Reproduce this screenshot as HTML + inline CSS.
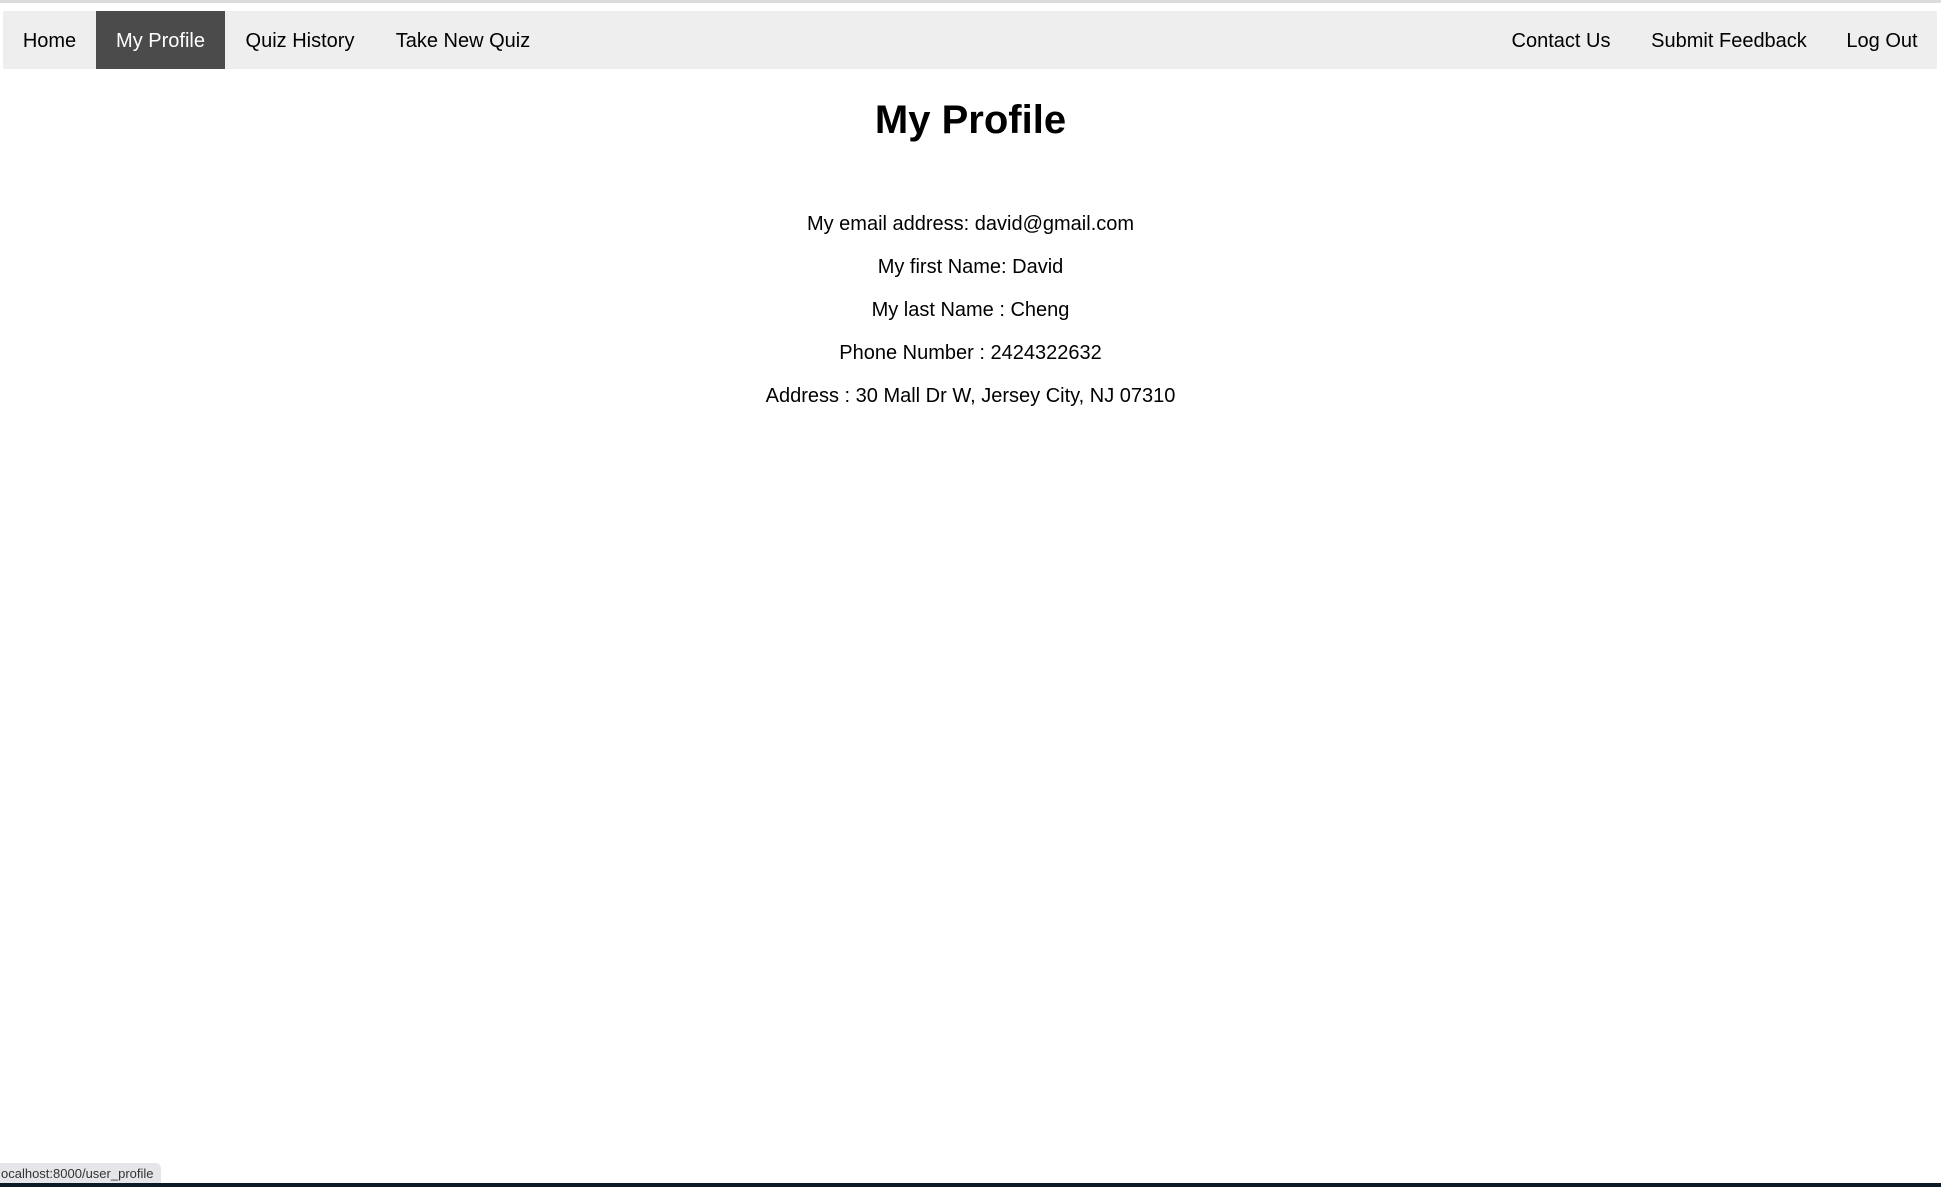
<!DOCTYPE html>
<html><head><style>
html,body{margin:0;padding:0;width:1941px;height:1187px;overflow:hidden;background:#fff;font-family:"Liberation Sans",Arial,sans-serif;position:relative}
.topline{position:absolute;left:0;top:0;width:1941px;height:3px;background:#dcdcdc}
.nav{position:absolute;left:3px;top:11px;width:1934px;height:58px;background:#eeeeee}
.nav a{position:absolute;top:0;height:58px;line-height:60px;font-size:20px;color:#000;text-decoration:none;white-space:nowrap;box-sizing:border-box;text-align:center}
.nav a.active{background:#4b4b4b;color:#fff}
h1{position:absolute;left:0;width:1941px;top:93px;margin:0;text-align:center;font-size:40px;font-weight:bold;line-height:54px}
.p{position:absolute;left:0;width:1941px;text-align:center;font-size:20px;line-height:24px;color:#000}
.tip{position:absolute;left:0;top:1163px;width:161px;height:20px;background:#e6e6ea;border-radius:0 5px 0 0;font-size:13px;line-height:21px;color:#333;padding-left:1px;box-sizing:border-box;white-space:nowrap}
.bot{position:absolute;left:0;top:1183px;width:1941px;height:4px;background:#0b1a24}
</style></head><body>
<div class="topline"></div>
<div class="nav">
<a style="left:0;width:93px">Home</a>
<a class="active" style="left:93px;width:129px">My Profile</a>
<a style="left:222px;width:150px">Quiz History</a>
<a style="left:372px;width:176px">Take New Quiz</a>
<a style="left:1488px;width:140px">Contact Us</a>
<a style="left:1628px;width:196px">Submit Feedback</a>
<a style="left:1824px;width:110px">Log Out</a>
</div>
<h1>My Profile</h1>
<div class="p" style="top:212px">My email address: david@gmail.com</div>
<div class="p" style="top:255px">My first Name: David</div>
<div class="p" style="top:298px">My last Name : Cheng</div>
<div class="p" style="top:341px">Phone Number : 2424322632</div>
<div class="p" style="top:384px">Address : 30 Mall Dr W, Jersey City, NJ 07310</div>
<div class="tip">ocalhost:8000/user_profile</div>
<div class="bot"></div>
</body></html>
